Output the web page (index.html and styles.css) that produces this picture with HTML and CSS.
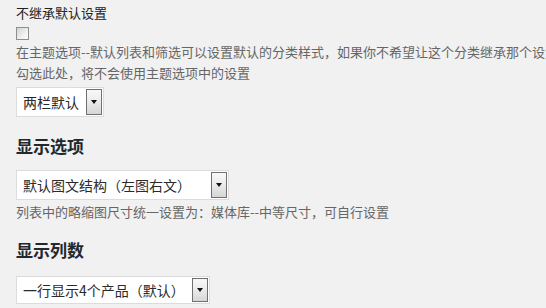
FILE: index.html
```html
<!DOCTYPE html>
<html lang="zh-CN">
<head>
<meta charset="utf-8">
<title>分类设置</title>
<link rel="stylesheet" href="styles.css">
</head>
<body>
<div class="page">
  <div class="field-label">不继承默认设置</div>
  <input type="checkbox" class="checkbox" aria-label="不继承默认设置">
  <p class="desc desc--first">在主题选项--默认列表和筛选可以设置默认的分类样式，如果你不希望让这个分类继承那个设置，<br>勾选此处，将不会使用主题选项中的设置</p>
  <div class="select select--narrow">
    <span class="select-value">两栏默认</span>
    <span class="select-btn"><span class="caret"></span></span>
  </div>

  <h3 class="section-title">显示选项</h3>
  <div class="select select--wide">
    <span class="select-value">默认图文结构（左图右文）</span>
    <span class="select-btn"><span class="caret"></span></span>
  </div>
  <p class="desc desc--after-select">列表中的略缩图尺寸统一设置为：媒体库--中等尺寸，可自行设置</p>

  <h3 class="section-title section-title--second">显示列数</h3>
  <div class="select select--mid">
    <span class="select-value">一行显示4个产品（默认）</span>
    <span class="select-btn"><span class="caret"></span></span>
  </div>
</div>
</body>
</html>
```

FILE: styles.css
```css
html, body {
  margin: 0;
  padding: 0;
  background: #f1f1f1;
  overflow: hidden;
}

body {
  font-family: "Noto Sans CJK SC", "Noto Sans", "Liberation Sans", sans-serif;
  color: #333;
}

.page {
  padding: 3px 16px 0 16px;
  width: 600px;
}

.field-label {
  font-size: 13px;
  line-height: 20px;
  color: #222;
}

.checkbox {
  -webkit-appearance: none;
  appearance: none;
  display: block;
  margin: 4px 0 0 0;
  width: 13px;
  height: 13px;
  box-sizing: border-box;
  border: 1px solid #8e8e8e;
  background: linear-gradient(135deg, #d4d4d4 0%, #f4f4f4 70%, #fbfbfb 100%);
  border-radius: 0;
}

.desc {
  margin: 1px 0 0 0;
  font-size: 13px;
  line-height: 21px;
  color: #666;
  white-space: nowrap;
}

.select {
  display: flex;
  align-items: stretch;
  box-sizing: border-box;
  height: 30px;
  margin-top: 4px;
  padding: 1px;
  border: 1px solid #dcdcdc;
  background: #fff;
}

.select--narrow { width: 88px; }
.select--wide { width: 213px; margin-top: 13px; }
.select--mid { width: 194px; height: 28px; margin-top: 15px; }

.select-value {
  flex: 1;
  display: flex;
  align-items: center;
  padding-left: 5px;
  font-size: 14px;
  color: #2a2a2a;
  white-space: nowrap;
  overflow: hidden;
}

.select-btn {
  width: 16px;
  box-sizing: border-box;
  border: 1px solid #707070;
  background: linear-gradient(to bottom, #f8f8f8 0%, #ececec 45%, #d6d6d6 100%);
  display: flex;
  align-items: center;
  justify-content: center;
}

.caret {
  width: 0;
  height: 0;
  border-left: 3.5px solid transparent;
  border-right: 3.5px solid transparent;
  border-top: 4px solid #111;
}

.section-title {
  margin: 18px 0 0 0;
  font-size: 17px;
  line-height: 22px;
  font-weight: bold;
  color: #23282d;
}

.section-title--second {
  margin-top: 17px;
}
```
